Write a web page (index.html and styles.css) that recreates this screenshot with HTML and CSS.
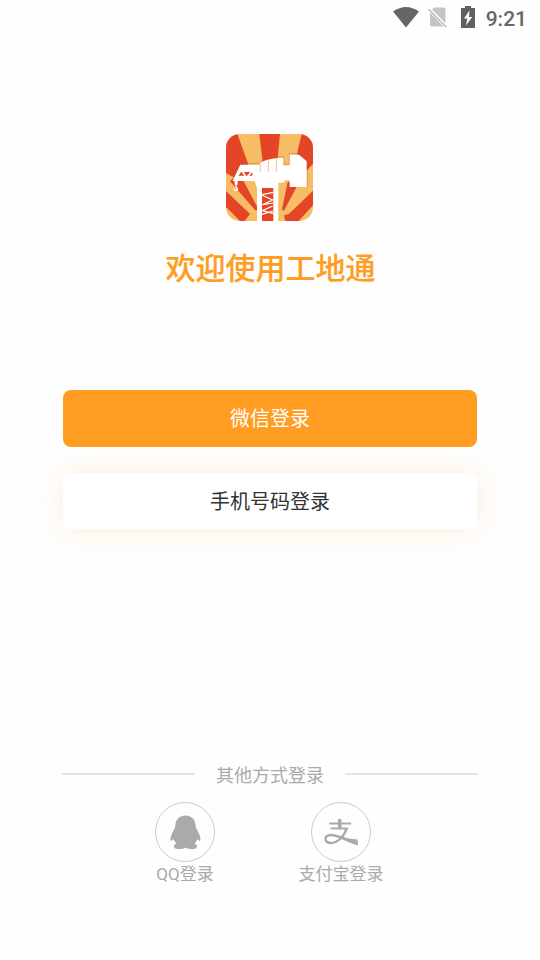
FILE: index.html
```html
<!DOCTYPE html>
<html lang="zh-CN">
<head>
<meta charset="utf-8">
<title>工地通</title>
<link rel="stylesheet" href="styles.css">
</head>
<body>
<header class="status">
  <svg class="wifi" viewBox="0 0 26 21"><path d="M0 4.500Q13-4.500 26 4.500L13 20.500Z" fill="#666"/></svg>
  <svg class="sim" viewBox="0 0 20 21"><path d="M6 .5H15.500Q17.500 .5 17.500 2.500V16.500L4 2.500Z M2 5.500L15.500 19.500H4Q2 19.500 2 17.500Z" fill="#c4c4c4"/><path d="M1 1.300L19 19.500" stroke="#fefefe" stroke-width="2"/><path d="M.5 2L18.200 20" stroke="#c0c0c0" stroke-width="1.600"/></svg>
  <svg class="battery" viewBox="0 0 14 22"><path d="M4 0H10V2H14V22H0V2H4Z" fill="#606060"/><path d="M8.500 4.500L3 12.500H6.300L5 19.500L11.200 11H8Z" fill="#fff"/></svg>
  <span class="time">9:21</span>
</header>
<main class="page">
  <svg class="logo" viewBox="18 18 261 261">
    <path d="M18 18H279V279H18Z" fill="#f7bd65"/>
    <g fill="#e44526">
      <path d="M18 18H52L86 112L45 150L18 135Z"/>
      <path d="M118 18H180L171 110H129Z"/>
      <path d="M245 18H279V108L248 140L228 90Z"/>
      <path d="M40 150H66L111 235V247L105 246L30 160Z"/>
      <path d="M18 189L90 258L74 279H60L18 237Z"/>
      <path d="M203 162H238L191 250L186 243Z"/>
      <path d="M279 188V232L236 279H196L192 262L206 259Z"/>
      <path d="M124 178H162V279H124Z"/>
    </g>
    <path d="M38 155L60 107H118L121 101Q142 87 191 86V109H208V77H238L262 99V178" fill="none" stroke="#c65827" stroke-width="3" opacity=".4"/>
    <path d="M38 158L61 110H118L121 104Q142 90 190 89V112H209V80H237L260 100V177H209V157H196L190 164H175V279H160V180H126V279H111V180L104 159H53V170H44V160Z" fill="#fff"/>
    <path d="M55 143L64 131L73 143ZM71 132H91L80 145ZM88 143L97 132V143Z" fill="#e44526"/>
    <path d="M121 108V132M145 98V132M169 88V132" fill="none" stroke="#e9a158" stroke-width="2"/>
    <path d="M48 169V177L53 182Q52 188 47 187Q42 186 43 181" fill="none" stroke="#fff" stroke-width="4"/>
    <path d="M126 200L160 193M126 202L158 216L127 230L159 225M158 234L127 248L160 257M126 259L159 249" fill="none" stroke="#fff" stroke-width="3.500"/>
  </svg>
  <h1>欢迎使用工地通</h1>
  <button class="login primary">微信登录</button>
  <button class="login phone">手机号码登录</button>
  <div class="divider"><span>其他方式登录</span></div>
  <div class="others">
    <a class="other">
      <span class="circle"><svg viewBox="-.5 -.5 60 60"><path d="M30 13C23 13 19.500 18 19.700 25C18 28 15 33 15 37Q15 40 18 36.500Q18.500 39 21 41C17.500 42 17.500 46.500 22 46.500Q28 47 30 45Q32 47 38 46.500C42.500 46.500 42.500 42 39 41Q41.500 39 42 36.500Q45 40 45 37C45 33 42 28 40.300 25C40.500 18 37 13 30 13Z" fill="#aaa"/></svg></span>
      <span>QQ登录</span>
    </a>
    <a class="other">
      <span class="circle"><svg viewBox="-.7 0 60 60"><g fill="none" stroke="#aaa"><path d="M17.500 21.500H39.500M19 26.500H36.500" stroke-width="2"/><path d="M28 17V26" stroke-width="3.500"/><path d="M35 26C33 34 26 41 19 41C12 41 12 33 19 33C27 33 35 39 46 41.500" stroke-width="2.400"/></g><path d="M29 34Q36 37 46 37.500V43.500Q38 41 29 36.500Z" fill="#aaa"/></svg></span>
      <span>支付宝登录</span>
    </a>
  </div>
</main>
</body>
</html>
```
FILE: styles.css
```css
* { box-sizing: border-box; }
body {
  margin: 0;
  height: 960px;
  background: #fefefe;
  font-family: Roboto, "Noto Sans CJK SC", sans-serif;
}
.status {
  height: 36px;
  padding: 0 13px 0 0;
  display: flex;
  justify-content: flex-end;
  align-items: center;
}
.wifi { width: 26px; height: 21px; margin: -2px 9px 0 0; }
.sim { width: 20px; height: 21px; margin: -1px 13px 0 0; }
.battery { width: 14px; height: 22px; margin: -2px 11px 0 0; }
.time { font-size: 21px; font-weight: 500; color: #666; line-height: 36px; padding-top: 2px; }
.page {
  display: flex;
  flex-direction: column;
  align-items: center;
  padding: 98px 63px 0 63px;
}
.logo { width: 87px; height: 87px; border-radius: 14px; margin-right: 1px; }
h1 {
  margin: 26px 0 0 1px;
  height: 44px;
  line-height: 44px;
  font-size: 30px;
  font-weight: 500;
  color: #ff9d23;
  -webkit-text-stroke: .2px #ff9d23;
}
.login {
  width: 414px;
  height: 57px;
  padding: 2px 0 0;
  border: 0;
  border-radius: 8px;
  font: 20px/55px Roboto, "Noto Sans CJK SC", sans-serif;
}
.primary { margin-top: 99px; background: #ff9d23; color: #fff; }
.phone {
  height: 56px;
  margin-top: 26px;
  line-height: 54px;
  background: #fff;
  color: #333;
  border-radius: 6px;
  box-shadow: 0 0 28px rgba(255, 157, 35, .17);
}
.divider {
  width: 416px;
  margin: 232px -1px 0;
  height: 26px;
  display: flex;
  align-items: center;
  gap: 21px;
  font-size: 18px;
  color: #aaa;
}
.divider::before, .divider::after {
  content: "";
  flex: 1;
  height: 2px;
  background: #e5e5e5;
}
.others { display: flex; width: 312px; margin-top: 15px; margin-right: 14px; }
.other {
  width: 156px;
  display: flex;
  flex-direction: column;
  align-items: center;
  font-size: 17px;
  line-height: 25px;
  color: #aaa;
}
.circle { width: 60px; height: 60px; border: 1px solid #ccc; border-radius: 50%; }
.circle svg { display: block; width: 60px; height: 60px; margin: -1px; }
```
